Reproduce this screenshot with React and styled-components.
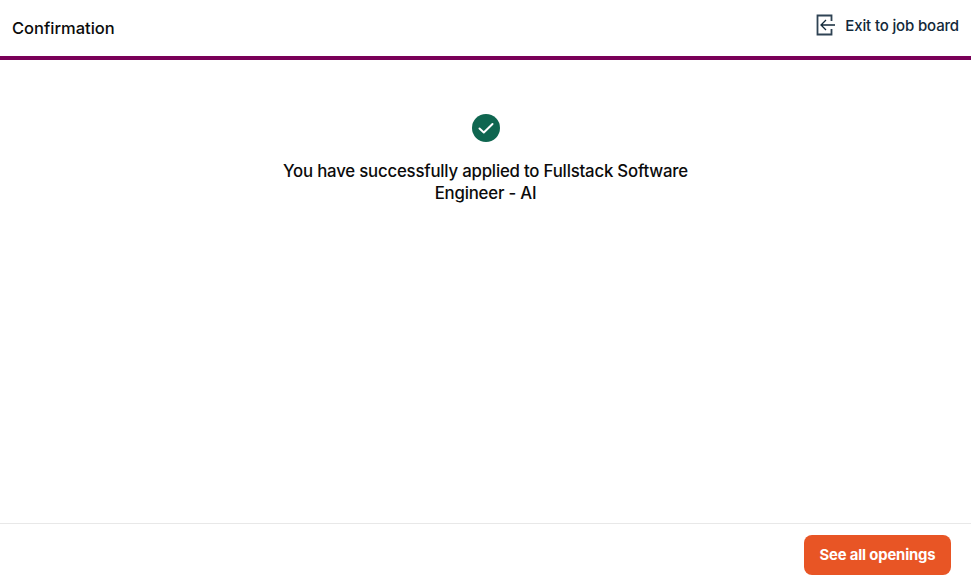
import React from "react"
import styled, { createGlobalStyle } from "styled-components"

const GlobalStyle = createGlobalStyle`
  html, body {
    margin: 0;
    padding: 0;
    background: #fff;
    font-family: Inter, "Liberation Sans", sans-serif;
  }
`

const Page = styled.div`
  width: 971px;
  height: 587px;
  display: flex;
  flex-direction: column;
  overflow: hidden;
`

const Header = styled.header`
  height: 60px;
  box-sizing: border-box;
  padding: 0 12px;
  display: flex;
  align-items: center;
  justify-content: space-between;
  border-bottom: 4px solid #7a0058;
`

const Title = styled.h1`
  margin: 0;
  font-size: 16.5px;
  line-height: 22px;
  font-weight: 500;
  color: #0b0b0b;
`

const ExitLink = styled.a`
  display: flex;
  align-items: center;
  gap: 9px;
  margin-bottom: 6px;
  font-size: 15px;
  font-weight: 500;
  letter-spacing: -0.15px;
  color: #12293a;
`

const Main = styled.main`
  flex: 1;
  display: flex;
  flex-direction: column;
  align-items: center;
  padding-top: 54px;
`

const Message = styled.p`
  margin: 18px 0 0;
  width: 430px;
  text-align: center;
  font-size: 16.8px;
  line-height: 22px;
  font-weight: 550;
  letter-spacing: -0.2px;
  color: #0b0b0b;
`

const Footer = styled.footer`
  height: 64px;
  box-sizing: border-box;
  border-top: 1px solid #e8e8e8;
  padding: 11px 20px 0 0;
  display: flex;
  justify-content: flex-end;
  align-items: flex-start;
`

const PrimaryButton = styled.button`
  width: 147px;
  height: 40px;
  border: 0;
  border-radius: 8px;
  background: #e85525;
  color: #fff;
  font-family: inherit;
  font-size: 14.8px;
  font-weight: 700;
  letter-spacing: -0.15px;
`

const ExitIcon = () => (
  <svg width="20" height="22" viewBox="0 0 20 22" fill="none">
    <path d="M15.5 7V1.5H1.5V20.5H15.5V15" stroke="#2f4354" strokeWidth="1.8" />
    <path d="M19 11H5M10 6L5 11L10 16" stroke="#12293a" strokeWidth="1.3" />
  </svg>
)

const CheckBadge = () => (
  <svg width="28" height="28" viewBox="0 0 28 28">
    <circle cx="14" cy="14" r="14" fill="#0f6650" />
    <path d="M7.5 14.5L11.8 18.5L20.5 10" fill="none" stroke="#fff" strokeWidth="2" strokeLinecap="round" strokeLinejoin="round" />
  </svg>
)

const App = () => {
  return (
    <Page>
      <GlobalStyle />
      <Header>
        <Title>Confirmation</Title>
        <ExitLink>
          <ExitIcon />
          Exit to job board
        </ExitLink>
      </Header>
      <Main>
        <CheckBadge />
        <Message>You have successfully applied to Fullstack Software Engineer - AI</Message>
      </Main>
      <Footer>
        <PrimaryButton>See all openings</PrimaryButton>
      </Footer>
    </Page>
  )
}

export default App
